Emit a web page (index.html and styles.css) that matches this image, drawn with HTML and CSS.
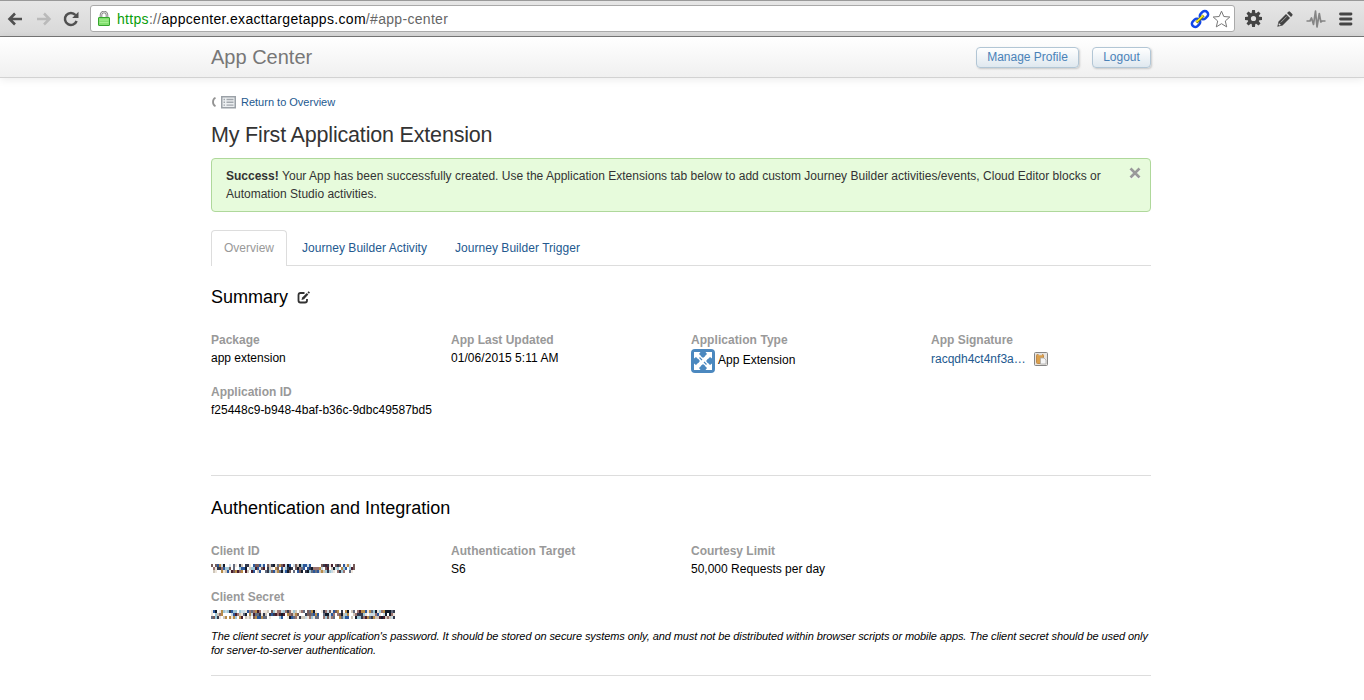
FILE: index.html
```html
<!DOCTYPE html>
<html lang="en">
<head>
<meta charset="utf-8">
<title>App Center</title>
<link rel="stylesheet" href="styles.css">
</head>
<body>
<div class="toolbar">
  <svg class="nav back" width="16" height="14" viewBox="0 0 16 14"><path d="M15 7H3M8 1.5L2.500 7L8 12.500" fill="none" stroke="#505050" stroke-width="2.600"/></svg>
  <svg class="nav forward" width="16" height="14" viewBox="0 0 16 14"><path d="M1 7H13M8 1.500L13.500 7L8 12.500" fill="none" stroke="#bababa" stroke-width="2.500"/></svg>
  <svg class="nav reload" width="16" height="16" viewBox="0 0 16 16"><path d="M12.500 4A6 6 0 1 0 13.600 10" fill="none" stroke="#505050" stroke-width="2.500"/><path d="M15.500 .8V7H9.200Z" fill="#505050"/></svg>
  <div class="address">
    <svg class="lock" width="12" height="16" viewBox="0 0 12 16"><path d="M3 8V4a3 3 0 0 1 6 0V8" fill="none" stroke="#888" stroke-width="2.600"/><path d="M3 8V4a3 3 0 0 1 6 0V8" fill="none" stroke="#ddd" stroke-width=".9"/><rect x=".5" y="6.500" width="11" height="8" rx=".5" fill="#83df70" stroke="#35a52d"/><path d="M1.500 9h9M1.500 11.500h9" stroke="#a5ef91"/></svg>
    <span class="url"><span class="secure">https</span><span class="muted">://</span>appcenter.exacttargetapps.com<span class="muted">/#app-center</span></span>
    <svg class="link" width="20" height="20" viewBox="0 0 20 20"><g transform="rotate(-44 10 10)" fill="none" stroke="#1247e8" stroke-width="2.500"><rect x="0" y="6.700" width="9" height="6.600" rx="3.300"/><rect x="11" y="6.700" width="9" height="6.600" rx="3.300"/><path d="M5 10H15" stroke="#777a20" stroke-width="3"/><path d="M5.300 9.700H14.700" stroke="#fff21a" stroke-width="1.600"/></g></svg>
    <svg class="star" width="19" height="18" viewBox="0 0 19 18"><path d="M9.500 1.200L11.800 6.500L17.800 7L13.300 11L14.700 16.900L9.500 13.700L4.300 16.900L5.700 11L1.200 7L7.200 6.500Z" fill="#fff" stroke="#777" stroke-linejoin="round"/></svg>
  </div>
  <svg class="gear" width="17" height="17" viewBox="0 0 17 17"><g fill="#444"><path id="tooth" d="M7.100 0h2.800l.6 4h-4zM7.100 17h2.800l.6-4h-4z"/><use href="#tooth" transform="rotate(45 8.500 8.500)"/><use href="#tooth" transform="rotate(90 8.500 8.500)"/><use href="#tooth" transform="rotate(135 8.500 8.500)"/></g><circle cx="8.500" cy="8.500" r="4.200" fill="none" stroke="#444" stroke-width="3.200"/></svg>
  <svg class="pencil" width="16" height="16" viewBox="0 0 16 16"><path d="M.3 15.700L1.500 10.500L9 3L13 7L5.500 14.500ZM10 2L11.400.7Q12.200 0 13 .7L15.300 3Q16 3.800 15.300 4.600L14 6Z" fill="#444"/><path d="M3.800 11.400L9.800 5.400" stroke="#a0a0a0"/><path d="M1.900 12l2.100 2.100-1.700.4-.8-.8z" fill="#ddd"/></svg>
  <svg class="pulse" width="20" height="20" viewBox="0 0 20 20"><path d="M.5 12H4L5.500 9L7.500 15.500L9.500 2L11 18L13.300 4.500L14.800 13L16 12H19.500" fill="none" stroke="#858585" stroke-width="1.700" stroke-linejoin="round"/></svg>
  <svg class="menu" width="14" height="14" viewBox="0 0 14 14"><path d="M1.500 2H12M1.500 7H12M1.500 12H12" stroke="#444" stroke-width="2.800" stroke-linecap="round"/></svg>
</div>
<header class="header">
  <div class="wrap header-row">
    <div class="brand">App Center</div>
    <div class="actions"><a class="button profile">Manage Profile</a><a class="button logout">Logout</a></div>
  </div>
</header>
<main class="wrap">
  <div class="return">
    <svg class="chevron" width="5" height="10" viewBox="0 0 5 10"><path d="M4.500 .8Q2 2 2 5Q2 8 4.500 9.200" fill="none" stroke="#929292" stroke-width="1.800"/></svg>
    <svg class="list" width="15" height="13" viewBox="0 0 15 13"><rect x=".75" y=".75" width="13.500" height="11" fill="#eceff1" stroke="#9ba1a7" stroke-width="1.500"/><path d="M2.500 3.500H4M5.500 3.500H12.500M2.500 6.300H4M5.500 6.300H12.500M2.500 9.100H4M5.500 9.100H12.500" stroke="#a2a8ae" stroke-width="1.400"/></svg>
    <a>Return to Overview</a>
  </div>
  <h1>My First Application Extension</h1>
  <div class="alert">
    <p><strong>Success!</strong> <span class="alert-first">Your App has been successfully created. Use the Application Extensions tab below to add custom Journey Builder activities/events, Cloud Editor blocks or</span><br><span class="alert-second">Automation Studio activities.</span></p>
    <svg class="close" width="12" height="12" viewBox="0 0 12 12"><path d="M1.500 2.300L10.500 11.300M10.500 2.300L1.500 11.300" stroke="#fff" stroke-width="2.800"/><path d="M1.500 1.500L10.500 10.500M10.500 1.500L1.500 10.500" stroke="#999" stroke-width="2.700"/></svg>
  </div>
  <nav class="tabs"><a class="tab active">Overview</a><a class="tab activity">Journey Builder Activity</a><a class="tab trigger">Journey Builder Trigger</a></nav>
  <section class="summary">
    <h2><span class="summary-title">Summary</span>
      <svg width="14" height="13" viewBox="0 0 14 13"><path d="M7.500 2H3.500Q1.500 2 1.500 4V9.500Q1.500 11.500 3.500 11.500H8Q10 11.500 10 9.500V8" fill="none" stroke="#333" stroke-width="1.800"/><path d="M4.500 9L5.200 6.500L9.800 2L11.300 3.500L7 8.300Z" fill="#333"/><path d="M10.500 1.300L11.600 .2L13 1.600L11.900 2.700Z" fill="#333"/></svg>
    </h2>
    <div class="fields">
      <div><h3>Package</h3><p>app extension</p></div>
      <div><h3>App Last Updated</h3><p class="date">01/06/2015 5:11 AM</p></div>
      <div><h3 class="type-label">Application Type</h3><p class="type">
        <svg width="24" height="24" viewBox="0 0 24 24"><rect width="24" height="24" rx="4" fill="#4b88bf"/><path d="M3 3H9.500L8 5L12 9L16 5L14.500 3H21V9.500L19 8L15 12L19 16L21 14.500V21H14.500L16 19L12 15L8 19L9.500 21H3V14.500L5 16L9 12L5 8L3 9.500Z" fill="#fff"/><path d="M9 12L12 9L15 12L12 15Z" fill="#fff"/><path d="M8.500 8.500L11 11M13 13L15.500 15.500" stroke="#4b88bf" stroke-width="1.200"/><path d="M3 12H8M16 12H21M12 3V8M12 16V21" stroke="#4b88bf" stroke-width="3"/></svg><span>App Extension</span></p></div>
      <div><h3>App Signature</h3><p class="signature"><a>racqdh4ct4nf3a…</a>
        <svg width="14" height="14" viewBox="0 0 14 14"><rect x=".5" y=".5" width="13" height="13" rx="1" fill="#e8e4df" stroke="#858585"/><rect x="2.500" y="2.500" width="7" height="9" rx="1" fill="#dba04c" stroke="#c08a4a"/><path d="M4.500 2.500h3.500" stroke="#ddd" stroke-width="1.500"/><path d="M6.500 6h3.500l2 2v4h-5.500z" fill="#f5f5f5" stroke="#aaa" stroke-width=".8"/></svg></p></div>
      <div class="app-id"><h3>Application ID</h3><p>f25448c9-b948-4baf-b36c-9dbc49587bd5</p></div>
    </div>
  </section>
  <section class="auth">
    <h2><span class="auth-title">Authentication and Integration</span></h2>
    <div class="fields">
      <div><h3>Client ID</h3><svg class="mosaic" width="144" height="12" data-seed="41"></svg></div>
      <div><h3 class="target-label">Authentication Target</h3><p>S6</p></div>
      <div><h3>Courtesy Limit</h3><p>50,000 Requests per day</p></div>
    </div>
    <div class="secret"><h3>Client Secret</h3><svg class="mosaic" width="184" height="12" data-seed="97"></svg></div>
    <p class="note"><span class="note-first">The client secret is your application's password. It should be stored on secure systems only, and must not be distributed within browser scripts or mobile apps. The client secret should be used only</span><br><span>for server-to-server authentication.</span></p>
  </section>
</main>
<script src="mosaic.js"></script>
</body>
</html>
```
FILE: styles.css
```css
* { box-sizing: border-box; }
body { margin: 0; height: 700px; overflow: hidden; background: #fff; color: #000; font: 12px/18px "Liberation Sans", Arial, sans-serif; }
svg { display: block; flex: none; }
h1, h2, h3, p { margin: 0; }
a { color: #23598f; }
.toolbar { height: 37px; display: flex; align-items: center; padding: 0 0 0 7px; background: linear-gradient(#e6e6e6, #d8d8d8); border-top: 1px solid #999; border-bottom: 1px solid #777; }
.forward { margin-left: 13px; }
.reload { margin-left: 11px; }
.address { width: 1145px; height: 27px; margin-left: 11px; padding: 0 3px 0 7px; display: flex; align-items: center; background: #fff; border: 1px solid #aaa; border-radius: 3px; }
.lock { margin-top: 1px; }
.url { margin-left: 7px; font-size: 14px; flex: 1; letter-spacing: .31px; white-space: nowrap; }
.secure { color: #0a9e0a; }
.muted { color: #666; }
.star { margin-left: 2px; }
.gear { margin-left: 10px; }
.pencil { margin-left: 15px; }
.pulse { margin-left: 13px; }
.menu { margin-left: 13px; }
.header { height: 41px; background: linear-gradient(#fff, #f0f0f0); border-bottom: 1px solid #d2d2d2; box-shadow: 0 1px 9px rgba(0,0,0,.09); }
.wrap { width: 940px; margin-left: 211px; }
.header-row { display: flex; justify-content: space-between; }
.brand { font-size: 20px; line-height: 40px; color: #777; }
.actions { display: flex; gap: 13px; padding-top: 10px; }
.button { height: 21px; border: 1px solid #b2c6d5; border-radius: 4px; background: linear-gradient(#fff, #dfe8ef); text-align: center; line-height: 18px; color: #4a82b8; box-shadow: 1px 1px 2px rgba(0,0,0,.18); white-space: nowrap; }
.profile { width: 103px; }
.logout { width: 59px; }
.return { display: flex; height: 18px; margin-top: 15px; align-items: center; font-size: 11px; }
.list { margin: 0 5px 0 5px; }
h1 { font-size: 21.5px; line-height: 28px; font-weight: 400; color: #333; margin-top: 10px; letter-spacing: -.18px; white-space: nowrap; }
.alert { height: 54px; margin-top: 9px; padding: 8px 9px 0 14px; display: flex; justify-content: space-between; border: 1px solid #afd89b; border-radius: 4px; background: #e7fbdc; color: #333; white-space: nowrap; }
.alert-first { letter-spacing: .018px; }
.close { margin-top: 0; }
.tabs { display: flex; height: 36px; margin-top: 18px; border-bottom: 1px solid #ddd; white-space: nowrap; }
.tab { line-height: 36px; }
.active { width: 76px; height: 36px; text-align: center; line-height: 35px; color: #999; border: 1px solid #ddd; border-bottom: 0; border-radius: 4px 4px 0 0; background: #fff; }
.activity { width: 125px; margin-left: 15px; letter-spacing: .04px; }
.trigger { margin-left: 28px; letter-spacing: .04px; }
h2 { display: flex; align-items: center; height: 24px; font-size: 18px; line-height: 24px; font-weight: 400; }
h2 svg { margin-left: 9px; }
h3 { font-size: 12px; line-height: 18px; color: #999; white-space: nowrap; }
.type-label, .target-label, .date { letter-spacing: .06px; }
.summary { height: 210px; padding-top: 19px; border-bottom: 1px solid #ddd; }
.fields { display: grid; grid-template-columns: repeat(4, 240px); margin-top: 22px; }
.summary .fields { grid-template-rows: 52px 36px; }
.type, .signature { display: flex; align-items: center; white-space: nowrap; }
.type svg { margin: 0 3px 0 0; }
.type { line-height: 22px; align-items: flex-start; }
.signature { height: 20px; }
.signature svg { margin-left: 8px; }
.auth { height: 200px; padding-top: 20px; border-bottom: 1px solid #ddd; }
.mosaic { margin-top: 3px; }
.secret { margin-top: 10px; height: 36px; }
.note { margin-top: 5px; font-size: 11px; line-height: 14px; font-style: italic; letter-spacing: -.083px; white-space: nowrap; }
```
FILE: mosaic.js
```javascript
// Fills redacted fields with small, reproducible coloured blocks.
const colors = ["#33394c", "#c9dae3", "#765b58", "#2b579b", "#eee6dc", "#111a29", "#9ec7d8", "#ffffff", "#9a7470", "#ffffff", "#656d80", "#cfc6b9", "#471d2c", "#ffffff", "#b78b48"];
document.querySelectorAll(".mosaic").forEach((svg) => {
  let seed = Number(svg.dataset.seed);
  for (let x = 0; x < svg.clientWidth; x += 2) {
    for (let y = 0; y < 9; y += 3) {
      seed = (seed * 16807) % 2147483647;
      const cell = document.createElementNS("http://www.w3.org/2000/svg", "rect");
      cell.setAttribute("x", x);
      cell.setAttribute("y", y + 1);
      cell.setAttribute("width", 2);
      cell.setAttribute("height", 3);
      cell.setAttribute("fill", colors[seed % colors.length]);
      svg.append(cell);
    }
  }
});
```
